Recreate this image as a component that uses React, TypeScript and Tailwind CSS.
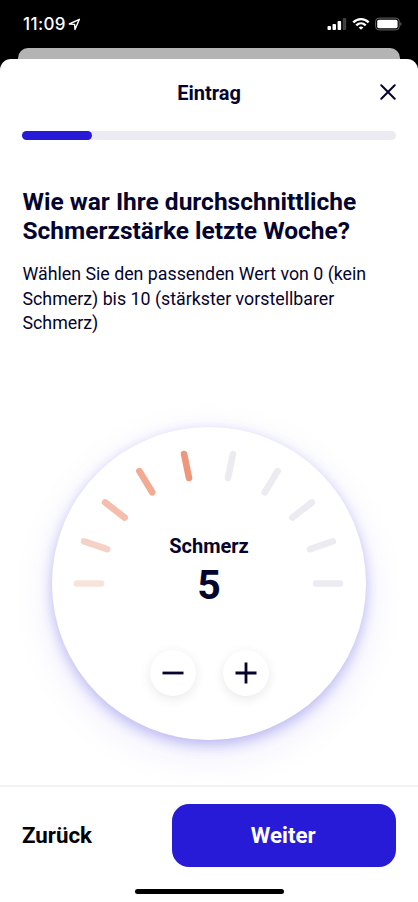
import { useState } from 'react'

// left half of the gauge; the right half mirrors it around x = 156.5
const ticks = [
  { x1: 25, y1: 156.5, x2: 49, y2: 156.5 },
  { x1: 32.1, y1: 114.3, x2: 55.1, y2: 122.2 },
  { x1: 53.1, y1: 75.4, x2: 72.7, y2: 90.6 },
  { x1: 87.4, y1: 44.1, x2: 100.2, y2: 65.3 },
  { x1: 132.1, y1: 27.1, x2: 137, y2: 50.9 },
]

const warm = ['#f8e3dc', '#f6d1c7', '#f4bdac', '#f2aa93', '#ef977c']

function StatusBar() {
  return (
    <div className="flex h-[47.5px] shrink-0 items-start justify-between pr-[16px] pl-[23px] text-white">
      <div className="flex items-center pt-[12px]">
        <span className="font-['Inter',sans-serif] text-[17px] leading-6 font-medium tracking-[0.4px]">11:09</span>
        <svg width="13" height="13" viewBox="0 0 13 13" className="ml-[2.5px]" fill="none">
          <path d="M1.3 6 11.4 1.3 7 11.4 6.6 6.4Z" stroke="currentColor" strokeWidth="1.4" strokeLinejoin="round" />
        </svg>
      </div>
      <div className="flex items-center gap-[5px] pt-[17px]">
        <svg width="20" height="14" viewBox="0 0 20 14" fill="currentColor">
          <rect x="0.5" y="9" width="3.5" height="4" rx="0.9" />
          <rect x="5.5" y="7" width="3.5" height="6" rx="0.9" />
          <rect x="10.6" y="4" width="3.5" height="9" rx="0.9" />
          <rect x="15.7" y="1" width="3.5" height="12" rx="0.9" fillOpacity="0.25" />
        </svg>
        <svg width="18" height="14" viewBox="0 0 18 14" fill="none" stroke="currentColor" strokeWidth="2.4">
          <path d="M1.3 5.3C5.6 1 12.4 1 16.7 5.3" />
          <path d="M4.3 8.3C7 5.7 11 5.7 13.7 8.3" />
          <path d="M6.7 10.4C8 9.2 10 9.2 11.3 10.4L9 12.8Z" fill="currentColor" stroke="none" />
        </svg>
        <svg width="27" height="14" viewBox="0 0 27 14" fill="none">
          <rect x="0.6" y="1.1" width="23.6" height="11.8" rx="3.3" stroke="#666" strokeWidth="1" />
          <rect x="2.2" y="2.7" width="20.4" height="8.6" rx="1.8" fill="currentColor" />
          <path d="M25.4 5C26.9 5.6 26.9 8.4 25.4 9Z" fill="#666" />
        </svg>
      </div>
    </div>
  )
}

function Gauge() {
  const [value, setValue] = useState(5)
  const step =
    'flex size-[46px] items-center justify-center rounded-full bg-white shadow-[0_3px_12px_rgba(0,0,0,0.09)]'

  return (
    <div className="relative mt-[91px] ml-[52.3px] flex size-[313.4px] shrink-0 flex-col items-center rounded-full bg-white shadow-[0_5px_14px_rgba(40,27,216,0.28),0_12px_44px_rgba(40,27,216,0.08)]">
      <svg className="absolute inset-0" width="313" height="313" viewBox="0 0 313 313" strokeWidth="6.6" strokeLinecap="round">
        {ticks.map((t, i) => (
          <line key={i} {...t} stroke={i < value ? warm[i] : '#ecebf1'} />
        ))}
        {ticks.map((t, i) => (
          <line key={i} x1={313 - t.x1} y1={t.y1} x2={313 - t.x2} y2={t.y2} stroke={9 - i < value ? '#ef977c' : '#ecebf1'} />
        ))}
      </svg>
      <p className="mt-[107px] text-[20px] leading-6 font-bold">Schmerz</p>
      <p className="mt-[5.5px] text-[41px] leading-[44px] font-bold">{value}</p>
      <div className="mt-[42.5px] ml-px flex gap-[27.5px]">
        <button className={step} aria-label="Weniger" onClick={() => setValue(Math.max(0, value - 1))}>
          <svg width="22" height="22" viewBox="0 0 22 22" stroke="currentColor" strokeWidth="2.8">
            <path d="M0.5 11H21.5" />
          </svg>
        </button>
        <button className={step} aria-label="Mehr" onClick={() => setValue(Math.min(10, value + 1))}>
          <svg width="22" height="22" viewBox="0 0 22 22" stroke="currentColor" strokeWidth="2.8">
            <path d="M0.5 11H21.5M11 0.5V21.5" />
          </svg>
        </button>
      </div>
    </div>
  )
}

export default function App() {
  return (
    <div className="flex h-[902px] w-[418px] flex-col overflow-hidden bg-black font-['Roboto',sans-serif] text-[#04042f]">
      <StatusBar />
      <div className="mx-[18px] h-[11px] shrink-0 rounded-t-[10px] bg-[#b4b4b4]" />

      <div className="flex flex-1 flex-col rounded-t-[11px] bg-white">
        <header className="relative flex h-[69px] items-center justify-center">
          <h1 className="text-[20px] leading-6 font-bold">Eintrag</h1>
          <button className="absolute top-[25.5px] right-[22px]" aria-label="Schließen">
            <svg width="16" height="16" viewBox="0 0 16 16" stroke="currentColor" strokeWidth="2" strokeLinecap="round">
              <path d="M1.3 1.3 14.7 14.7M14.7 1.3 1.3 14.7" />
            </svg>
          </button>
        </header>

        <div className="mx-[22px] mt-[3.5px] h-[9px] shrink-0 rounded-full bg-[#ecebf1]">
          <div className="h-full w-[70px] rounded-full bg-[#281bd8]" />
        </div>

        <div className="mt-[47px] ml-[22.5px] whitespace-nowrap">
          <h2 className="text-[24.5px] leading-[29px] font-bold">
            Wie war Ihre durchschnittliche
            <br />
            Schmerzstärke letzte Woche?
          </h2>
          <p className="mt-[17px] text-[17.8px] leading-[24.5px]">
            Wählen Sie den passenden Wert von 0 (kein
            <br />
            Schmerz) bis 10 (stärkster vorstellbarer
            <br />
            Schmerz)
          </p>
        </div>

        <Gauge />

        <footer className="relative mt-auto h-[117px] shrink-0 border-t-2 border-[#f3f3f4] bg-white px-[22px] pt-[17.4px]">
          <div className="flex items-center justify-between">
            <button className="pb-px text-[22.3px] leading-7 font-bold text-black">Zurück</button>
            <button className="h-[62.3px] w-[224.5px] rounded-[17px] bg-[#281bd8] pr-px text-[22.3px] font-bold text-white">Weiter</button>
          </div>
          <div className="mx-auto mt-[22.3px] h-[5px] w-[149px] rounded-full bg-black" />
        </footer>
      </div>
    </div>
  )
}
